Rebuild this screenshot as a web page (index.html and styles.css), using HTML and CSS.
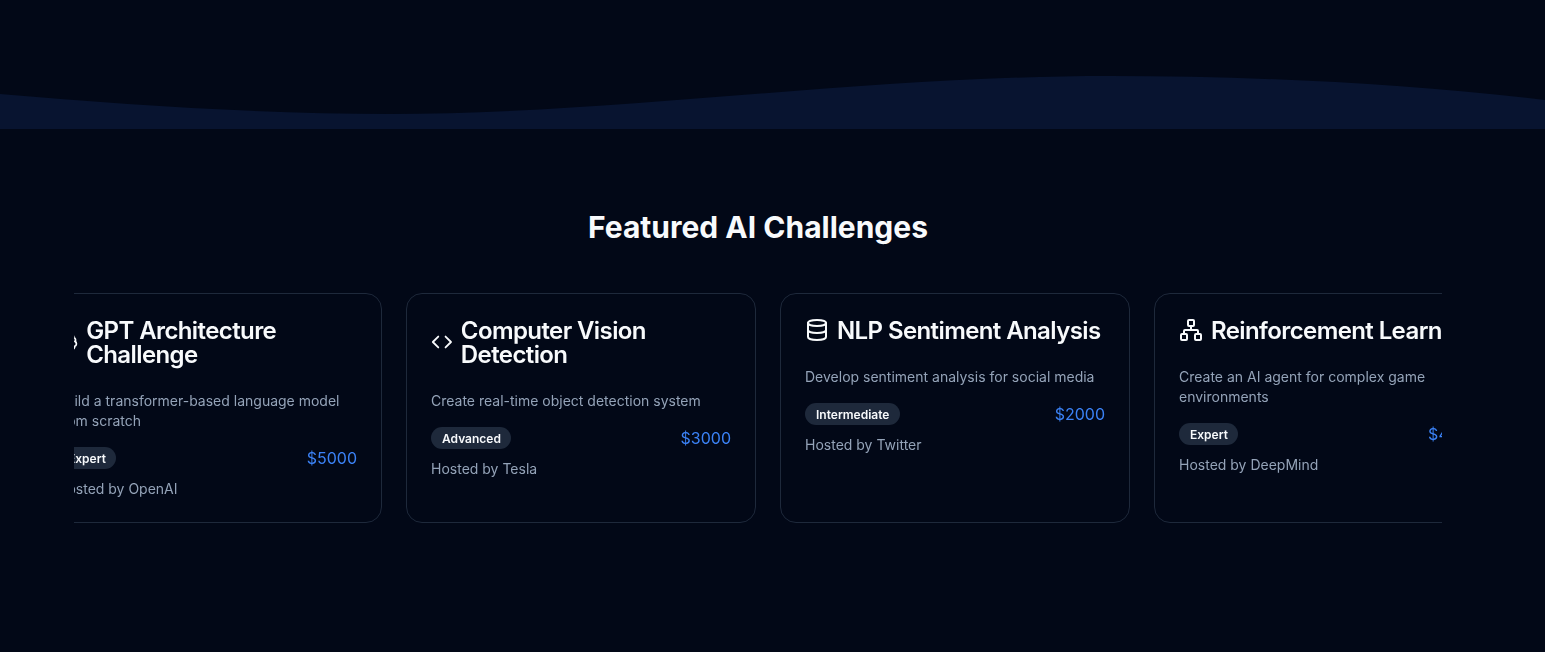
FILE: index.html
```html
<!DOCTYPE html>
<html lang="en">
<head>
  <meta charset="UTF-8" />
  <meta name="viewport" content="width=device-width, initial-scale=1.0" />
  <title>Featured AI Challenges</title>
  <link rel="stylesheet" href="styles.css">
</head>
<body>
  <svg class="wave" viewBox="0 0 1545 129" preserveAspectRatio="none" aria-hidden="true">
    <path d="M0 94 C 130 105, 260 114, 390 114 C 620 114, 860 76, 1110 76 C 1260 76, 1410 84, 1545 100 L 1545 129 L 0 129 Z" />
  </svg>

  <section class="challenges">
    <h2>Featured AI Challenges</h2>
    <div class="scroller">
      <div class="track">
        <article class="card">
          <h3 class="card-title">
            <svg class="icon" viewBox="0 0 24 24">
              <path d="M9.5 2A2.5 2.5 0 0 1 12 4.5v15a2.5 2.5 0 0 1-4.96.44 2.5 2.5 0 0 1-2.96-3.08 3 3 0 0 1-.34-5.58 2.5 2.5 0 0 1 1.32-4.24 2.5 2.5 0 0 1 1.98-3A2.5 2.5 0 0 1 9.5 2Z" />
              <path d="M14.5 2A2.5 2.5 0 0 0 12 4.5v15a2.5 2.5 0 0 0 4.96.44 2.5 2.5 0 0 0 2.96-3.08 3 3 0 0 0 .34-5.58 2.5 2.5 0 0 0-1.32-4.24 2.5 2.5 0 0 0-1.98-3A2.5 2.5 0 0 0 14.5 2Z" />
            </svg>
            <span class="title-text">GPT Architecture Challenge</span>
          </h3>
          <p class="desc">Build a transformer-based language model from scratch</p>
          <div class="meta">
            <span class="badge">Expert</span>
            <span class="price">$5000</span>
          </div>
          <p class="host">Hosted by OpenAI</p>
        </article>

        <article class="card">
          <h3 class="card-title">
            <svg class="icon" viewBox="0 0 24 24">
              <polyline points="16 18 22 12 16 6" />
              <polyline points="8 6 2 12 8 18" />
            </svg>
            <span class="title-text">Computer Vision Detection</span>
          </h3>
          <p class="desc">Create real-time object detection system</p>
          <div class="meta">
            <span class="badge">Advanced</span>
            <span class="price">$3000</span>
          </div>
          <p class="host">Hosted by Tesla</p>
        </article>

        <article class="card">
          <h3 class="card-title">
            <svg class="icon" viewBox="0 0 24 24">
              <ellipse cx="12" cy="5" rx="9" ry="3" />
              <path d="M3 5V19A9 3 0 0 0 21 19V5" />
              <path d="M3 12A9 3 0 0 0 21 12" />
            </svg>
            <span class="title-text">NLP Sentiment Analysis</span>
          </h3>
          <p class="desc">Develop sentiment analysis for social media</p>
          <div class="meta">
            <span class="badge">Intermediate</span>
            <span class="price">$2000</span>
          </div>
          <p class="host">Hosted by Twitter</p>
        </article>

        <article class="card">
          <h3 class="card-title">
            <svg class="icon" viewBox="0 0 24 24">
              <rect x="16" y="16" width="6" height="6" rx="1" />
              <rect x="2" y="16" width="6" height="6" rx="1" />
              <rect x="9" y="2" width="6" height="6" rx="1" />
              <path d="M5 16v-3a1 1 0 0 1 1-1h12a1 1 0 0 1 1 1v3" />
              <path d="M12 12V8" />
            </svg>
            <span class="title-text">Reinforcement Learning</span>
          </h3>
          <p class="desc">Create an AI agent for complex game environments</p>
          <div class="meta">
            <span class="badge">Expert</span>
            <span class="price">$4000</span>
          </div>
          <p class="host">Hosted by DeepMind</p>
        </article>
      </div>
    </div>
  </section>
</body>
</html>
```

FILE: styles.css
```css
* {
  box-sizing: border-box;
}
html, body {
  margin: 0;
  height: 100%;
}
body {
  font-family: Inter, "Liberation Sans", sans-serif;
  background: #020817;
  color: #f8fafc;
  overflow: hidden;
}
.wave {
  display: block;
  width: 100%;
  height: 129px;
}
.wave path {
  fill: #081430;
}
.challenges {
  width: 1368px;
  margin-left: 74px;
  padding-top: 80px;
}
h2 {
  margin: 0 0 48px;
  font-size: 30px;
  line-height: 36px;
  font-weight: 700;
  text-align: center;
}
.scroller {
  overflow: hidden;
}
.track {
  display: flex;
  gap: 24px;
  width: max-content;
  transform: translateX(-42px);
  will-change: transform;
}
.card {
  width: 350px;
  height: 230px;
  padding: 24px;
  border: 1px solid #1e293b;
  border-radius: 16px;
  background: #020817;
}
.card-title {
  display: flex;
  align-items: center;
  gap: 8px;
  margin: 0 0 24px;
  font-size: 24px;
  line-height: 24px;
  font-weight: 600;
  letter-spacing: -0.6px;
}
.title-text {
  padding-top: 1px;
}
.icon {
  width: 24px;
  height: 24px;
  margin-bottom: 1px;
  fill: none;
  stroke: currentColor;
  stroke-width: 2;
  stroke-linecap: round;
  stroke-linejoin: round;
}
.desc {
  margin: 0 0 16px;
  font-size: 14px;
  line-height: 20px;
  color: #94a3b8;
}
.meta {
  display: flex;
  align-items: center;
  justify-content: space-between;
  margin-bottom: 10px;
}
.badge {
  padding: 3px 9.3px 1px 10px;
  border: 1px solid transparent;
  border-radius: 999px;
  background: #1e293b;
  font-size: 12px;
  line-height: 16px;
  font-weight: 600;
}
.price {
  font-size: 16px;
  line-height: 22px;
  color: #3b82f6;
}
.host {
  margin: 0;
  font-size: 14px;
  line-height: 20px;
  color: #94a3b8;
}
```
